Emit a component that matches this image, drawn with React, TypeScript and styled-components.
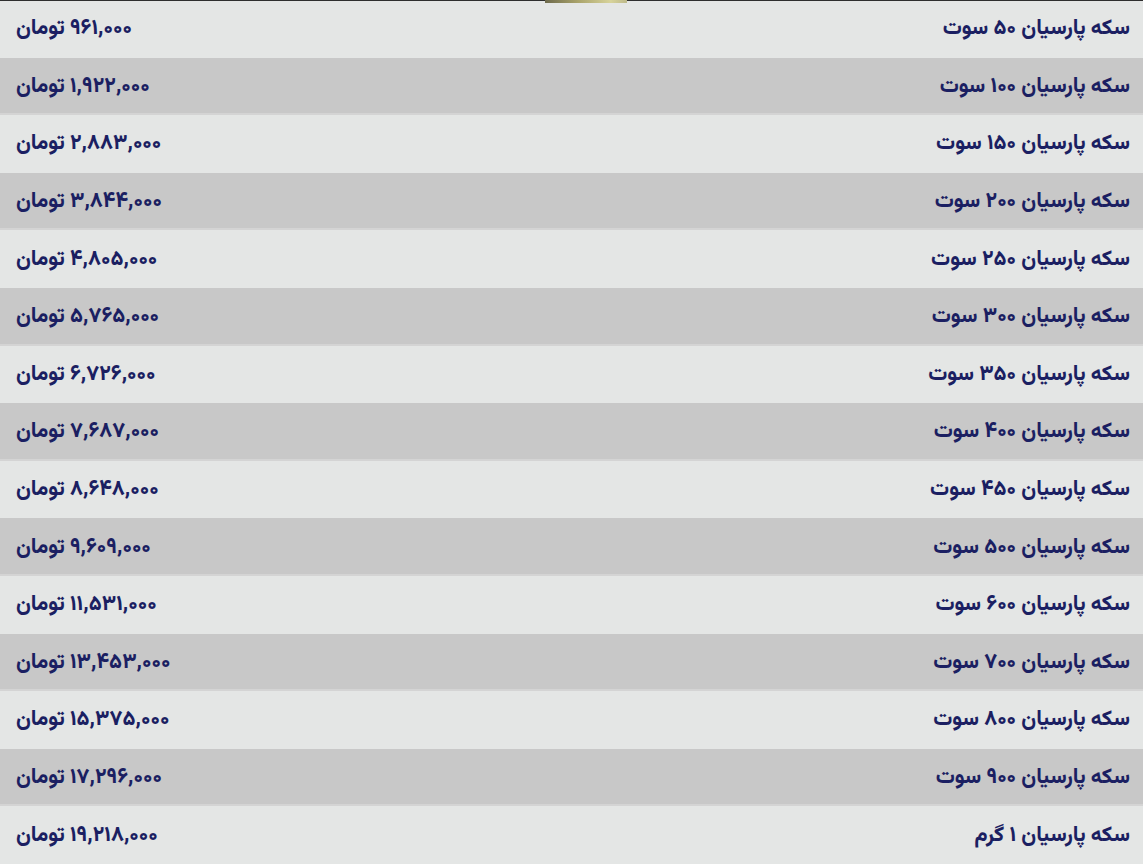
import React from "react";
import styled, { createGlobalStyle } from "styled-components";

const Global = createGlobalStyle`
  html, body { margin: 0; padding: 0; background: #e4e6e5; }
  body { font-family: "Vazirmatn", "Noto Sans Arabic", "DejaVu Sans Condensed", "DejaVu Sans", sans-serif; }
`;

const Page = styled.div`
  position: relative;
  width: 1143px;
  height: 864px;
  direction: rtl;
  overflow: hidden;
  background: #e4e6e5;
`;

const Strip = styled.div`
  position: absolute;
  top: 0;
  left: 0;
  right: 0;
  height: 1px;
  background: #2e2e2e;
`;

const Sliver = styled.div`
  position: absolute;
  top: 0;
  left: 545px;
  width: 82px;
  height: 3px;
  background: linear-gradient(90deg, #6d6a4c 0%, #a9a36a 40%, #d7d39a 80%, #bdb98a 100%);
`;

const Table = styled.div`
  height: 100%;
  display: grid;
  grid-template-rows: repeat(15, 1fr);
`;

const Row = styled.div<{ $alt: boolean }>`
  display: flex;
  align-items: center;
  justify-content: space-between;
  padding: 0 13px 0 16px;
  background: ${(p) => (p.$alt ? "#c8c8c8" : "#e4e6e5")};
  box-shadow: ${(p) => (p.$alt ? "inset 0 -2px 0 #d4d4d4" : "none")};
  color: #1b1f62;
  font-weight: 800;
  font-size: 21.2px;
`;

const Name = styled.span`
  white-space: nowrap;
`;

const Price = styled.span`
  white-space: nowrap;
`;

const rows: [string, string][] = [
  ["سکه پارسیان ۵۰ سوت", "۹۶۱,۰۰۰ تومان"],
  ["سکه پارسیان ۱۰۰ سوت", "۱,۹۲۲,۰۰۰ تومان"],
  ["سکه پارسیان ۱۵۰ سوت", "۲,۸۸۳,۰۰۰ تومان"],
  ["سکه پارسیان ۲۰۰ سوت", "۳,۸۴۴,۰۰۰ تومان"],
  ["سکه پارسیان ۲۵۰ سوت", "۴,۸۰۵,۰۰۰ تومان"],
  ["سکه پارسیان ۳۰۰ سوت", "۵,۷۶۵,۰۰۰ تومان"],
  ["سکه پارسیان ۳۵۰ سوت", "۶,۷۲۶,۰۰۰ تومان"],
  ["سکه پارسیان ۴۰۰ سوت", "۷,۶۸۷,۰۰۰ تومان"],
  ["سکه پارسیان ۴۵۰ سوت", "۸,۶۴۸,۰۰۰ تومان"],
  ["سکه پارسیان ۵۰۰ سوت", "۹,۶۰۹,۰۰۰ تومان"],
  ["سکه پارسیان ۶۰۰ سوت", "۱۱,۵۳۱,۰۰۰ تومان"],
  ["سکه پارسیان ۷۰۰ سوت", "۱۳,۴۵۳,۰۰۰ تومان"],
  ["سکه پارسیان ۸۰۰ سوت", "۱۵,۳۷۵,۰۰۰ تومان"],
  ["سکه پارسیان ۹۰۰ سوت", "۱۷,۲۹۶,۰۰۰ تومان"],
  ["سکه پارسیان ۱ گرم", "۱۹,۲۱۸,۰۰۰ تومان"],
];

export default function App() {
  return (
    <>
      <Global />
      <Page>
        <Table>
          {rows.map(([name, price], i) => (
            <Row key={i} $alt={i % 2 === 1}>
              <Name>{name}</Name>
              <Price>{price}</Price>
            </Row>
          ))}
        </Table>
        <Strip />
        <Sliver />
      </Page>
    </>
  );
}
